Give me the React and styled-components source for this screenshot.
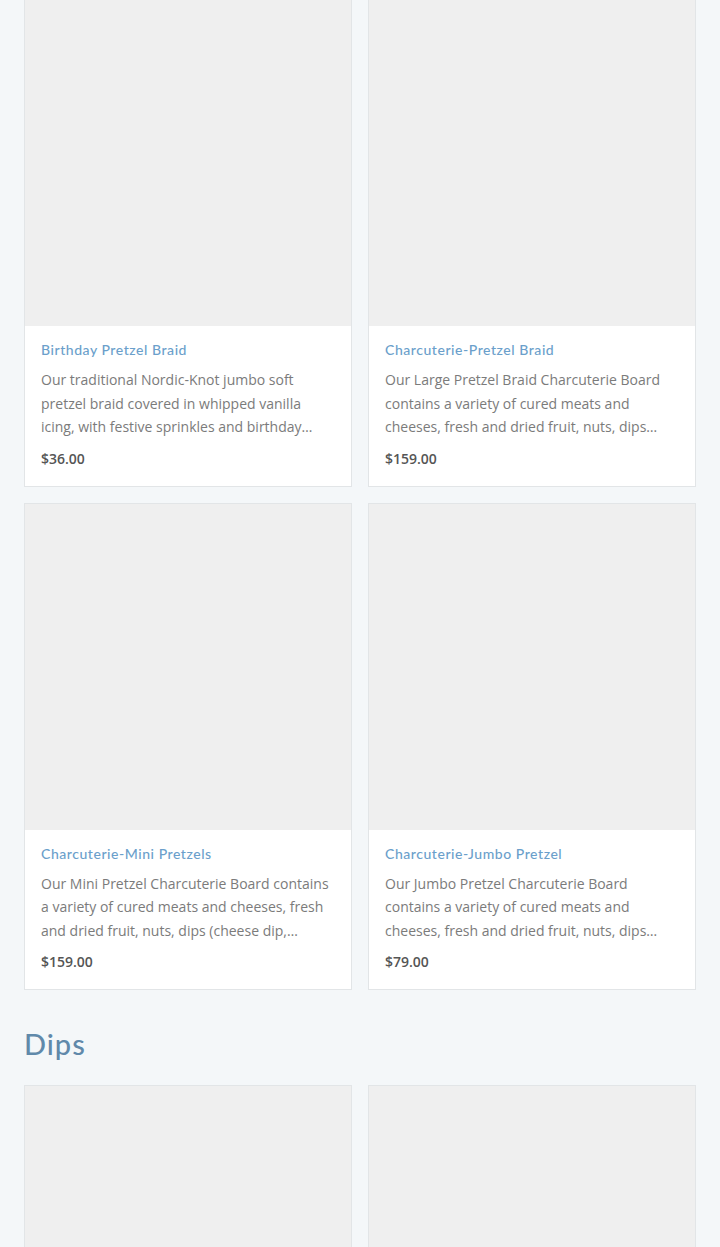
import React from "react";
import styled, { createGlobalStyle } from "styled-components";

const GlobalStyle = createGlobalStyle`
  html, body {
    margin: 0;
    padding: 0;
    background: #f4f7f9;
  }
  body {
    font-family: "Open Sans", "Liberation Sans", sans-serif;
  }
`;

const Page = styled.div`
  padding: 0 24px;
  margin-top: -1px;
`;

const Grid = styled.div`
  display: grid;
  grid-template-columns: 1fr 1fr;
  gap: 16px;
`;

const Card = styled.div`
  background: #fff;
  border: 1px solid #e2e5e7;
  display: flex;
  flex-direction: column;
`;

const Thumb = styled.div`
  aspect-ratio: 1 / 1;
  background: #efefef;
`;

const Body = styled.div`
  padding: 14px 16px 17px;
`;

const Title = styled.div`
  font-family: "Lato", "Liberation Sans", sans-serif;
  font-size: 14px;
  font-weight: 500;
  letter-spacing: 0.55px;
  line-height: 20px;
  color: #6b9fcb;
`;

const Desc = styled.p`
  margin: 8px 0 0;
  font-size: 14px;
  line-height: 23.5px;
  color: #7b7b7b;
  display: -webkit-box;
  -webkit-line-clamp: 3;
  -webkit-box-orient: vertical;
  overflow: hidden;
`;

const Price = styled.div`
  margin-top: 10px;
  font-size: 14px;
  font-weight: 600;
  line-height: 20px;
  color: #555;
`;

const Heading = styled.h2`
  font-family: "Lato", "Liberation Sans", sans-serif;
  font-size: 29px;
  font-weight: 500;
  letter-spacing: 1px;
  line-height: 34px;
  color: #6089aa;
  margin: 37px 0 24px;
`;

const products = [
  {
    name: "Birthday Pretzel Braid",
    desc: "Our traditional Nordic-Knot jumbo soft pretzel braid covered in whipped vanilla icing, with festive sprinkles and birthday candles for your celebration.",
    price: "$36.00",
  },
  {
    name: "Charcuterie-Pretzel Braid",
    desc: "Our Large Pretzel Braid Charcuterie Board contains a variety of cured meats and cheeses, fresh and dried fruit, nuts, dips (cheese dip, mustard) and more.",
    price: "$159.00",
  },
  {
    name: "Charcuterie-Mini Pretzels",
    desc: "Our Mini Pretzel Charcuterie Board contains a variety of cured meats and cheeses, fresh and dried fruit, nuts, dips (cheese dip, mustard) and more.",
    price: "$159.00",
  },
  {
    name: "Charcuterie-Jumbo Pretzel",
    desc: "Our Jumbo Pretzel Charcuterie Board contains a variety of cured meats and cheeses, fresh and dried fruit, nuts, dips (cheese dip, mustard) and more.",
    price: "$79.00",
  },
];

const ProductCard = ({ name, desc, price }) => (
  <Card>
    <Thumb />
    <Body>
      <Title>{name}</Title>
      <Desc>{desc}</Desc>
      <Price>{price}</Price>
    </Body>
  </Card>
);

export default function App() {
  return (
    <>
      <GlobalStyle />
      <Page>
        <Grid>
          {products.map((p) => (
            <ProductCard key={p.name} {...p} />
          ))}
        </Grid>
        <Heading>Dips</Heading>
        <Grid>
          <Card>
            <Thumb />
          </Card>
          <Card>
            <Thumb />
          </Card>
        </Grid>
      </Page>
    </>
  );
}
